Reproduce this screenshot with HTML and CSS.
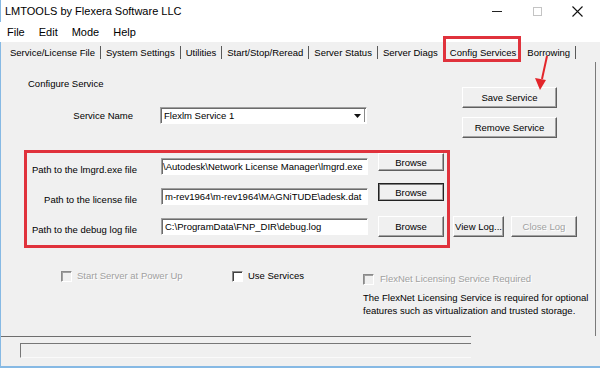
FILE: index.html
```html
<!DOCTYPE html>
<html lang="en">
  <head>
    <meta charset="UTF-8" />
    <meta name="viewport" content="width=device-width, initial-scale=1.0" />
    <title>LMTOOLS by Flexera Software LLC</title>
    <link rel="stylesheet" href="styles.css">
  </head>
  <body>
    <div class="window">
      <div class="titlebar">
        <span class="title">LMTOOLS by Flexera Software LLC</span>
        <div class="controls">
          <span class="ctl"><span class="ctl-min"></span></span>
          <span class="ctl"><span class="ctl-max"></span></span>
          <span class="ctl">
            <svg width="11" height="11" viewBox="0 0 11 11">
              <path d="M0.5 0.5 L10.5 10.5 M10.5 0.5 L0.5 10.5" stroke="#111" stroke-width="1.1" fill="none" />
            </svg>
          </span>
        </div>
      </div>

      <div class="menubar">
        <span class="menu-item">File</span>
        <span class="menu-item">Edit</span>
        <span class="menu-item">Mode</span>
        <span class="menu-item">Help</span>
      </div>

      <div class="tabs">
        <span class="tab">Service/License File</span>
        <span class="tab">System Settings</span>
        <span class="tab">Utilities</span>
        <span class="tab">Start/Stop/Reread</span>
        <span class="tab">Server Status</span>
        <span class="tab">Server Diags</span>
        <span class="tab active">Config Services</span>
        <span class="tab">Borrowing</span>
      </div>

      <div class="panel">
        <div class="top">
          <div class="top-left">
            <div class="heading">Configure Service</div>
            <div class="svc-row">
              <label class="svc-label">Service Name</label>
              <div class="combo">
                <span class="combo-text">Flexlm Service 1</span>
                <span class="combo-arrow">
                  <svg width="7" height="4" viewBox="0 0 7 4"><path d="M0 0 H7 L3.5 4 Z" fill="#111" /></svg>
                </span>
              </div>
            </div>
          </div>
          <div class="top-right">
            <button class="btn">Save Service</button>
            <button class="btn">Remove Service</button>
          </div>
        </div>

        <div class="paths">
          <div class="path-box">
            <div class="path-row">
              <label class="path-label">Path to the lmgrd.exe file</label>
              <div class="field field-clip">\Autodesk\Network License Manager\lmgrd.exe</div>
              <button class="btn browse">Browse</button>
            </div>
            <div class="path-row row-2">
              <label class="path-label">Path to the license file</label>
              <div class="field">m-rev1964\m-rev1964\MAGNiTUDE\adesk.dat</div>
              <button class="btn browse browse-focus">Browse</button>
            </div>
            <div class="path-row row-3">
              <label class="path-label">Path to the debug log file</label>
              <div class="field">C:\ProgramData\FNP_DIR\debug.log</div>
              <button class="btn browse">Browse</button>
            </div>
          </div>
          <div class="log-buttons">
            <button class="btn btn-view">View Log...</button>
            <button class="btn btn-close" disabled>Close Log</button>
          </div>
        </div>

        <div class="options">
          <div class="check-item item-power disabled">
            <span class="check"></span>
            <span>Start Server at Power Up</span>
          </div>
          <div class="check-item item-services">
            <span class="check"></span>
            <span>Use Services</span>
          </div>
          <div class="flexnet">
            <div class="check-item disabled">
              <span class="check"></span>
              <span>FlexNet Licensing Service Required</span>
            </div>
            <p class="note">The FlexNet Licensing Service is required for optional<br>features such as virtualization and trusted storage.</p>
          </div>
        </div>
      </div>

      <div class="footer">
        <div class="status"></div>
      </div>

      <!-- annotations drawn over the dialog -->
      <div class="tab-mark"></div>
      <svg class="arrow" width="24" height="40" viewBox="0 0 24 40">
        <path d="M17 4 L12 27" stroke="#e3262b" stroke-width="2" fill="none" />
        <polygon points="5,26 16,28 10,38" fill="#e3262b" />
      </svg>
    </div>
  </body>
</html>
```

FILE: styles.css
```css
body {
  margin: 0;
  background-color: #fff;
  font-family: "Liberation Sans", Arial, sans-serif;
  color: #000;
}

.window {
  position: relative;
  width: 600px;
  height: 368px;
  box-sizing: border-box;
  border-left: 1px solid #86b9e4;
  border-bottom: 2px solid #86b9e4;
  background-color: #f0f0f0;
  display: flex;
  flex-direction: column;
}

.titlebar {
  height: 22px;
  background-color: #fff;
  display: flex;
  align-items: center;
  padding-left: 4px;
  font-size: 11px;
}

.controls {
  margin-left: auto;
  margin-right: 3px;
  display: flex;
  height: 100%;
}

.ctl {
  width: 40px;
  display: flex;
  justify-content: center;
  align-items: center;
}

.ctl-min {
  width: 10px;
  height: 1px;
  background-color: #222;
}

.ctl-max {
  width: 9px;
  height: 9px;
  box-sizing: border-box;
  border: 1px solid #c4c4c4;
}

.menubar {
  height: 20px;
  background-color: #fff;
  display: flex;
  align-items: center;
  margin-left: -1px;
  font-size: 11px;
}

.menu-item {
  padding: 0 7px;
}

.tabs {
  height: 20px;
  display: flex;
  align-items: center;
  padding-left: 4px;
  font-size: 9.5px;
}

.tab {
  padding: 0 5px;
  line-height: 13px;
  border-right: 1px solid #5a5a5a;
  white-space: nowrap;
}

.tab.active {
  padding: 0 5px 0 6px;
  border-right-color: transparent;
}

.panel {
  height: 274px;
  width: 595px;
  box-sizing: border-box;
  border-right: 1px solid #7a7a7a;
  font-size: 9.5px;
}

.top {
  display: flex;
  height: 76px;
}

.top-left {
  padding-left: 27px;
}

.heading {
  margin-top: 15px;
  line-height: 14px;
}

.svc-row {
  display: flex;
  align-items: center;
  margin-top: 16px;
}

.svc-label {
  width: 105px;
  text-align: right;
}

.combo {
  margin-left: 27px;
  width: 207px;
  height: 17px;
  box-sizing: border-box;
  background-color: #fff;
  border: 1px solid;
  border-color: #a0a0a0 #fff #fff #a0a0a0;
  box-shadow: inset 1px 1px #6b6b6b;
  display: flex;
  align-items: center;
}

.combo-text {
  padding-left: 3px;
  flex: 1;
}

.combo-arrow {
  width: 14px;
  height: 13px;
  margin-right: 1px;
  display: flex;
  align-items: center;
  justify-content: center;
  border-right: 1px solid #8a8a8a;
}

.top-right {
  margin-left: auto;
  margin-right: 38px;
  padding-top: 25px;
  display: flex;
  flex-direction: column;
  gap: 9px;
}

.top-right .btn {
  width: 95px;
  height: 21px;
}

.btn {
  font-family: "Liberation Sans", Arial, sans-serif;
  font-size: 9.5px;
  color: #000;
  background-color: #f0f0f0;
  border: 1px solid;
  border-color: #fff #5f5f5f #5f5f5f #fff;
  box-shadow: inset -1px -1px #a3a3a3;
  padding: 0;
  box-sizing: border-box;
}

.btn:disabled {
  color: #a0a0a0;
  text-shadow: 1px 1px #fff;
}

.paths {
  display: flex;
  margin: 12px 0 0 23px;
}

.path-box {
  width: 426px;
  height: 98px;
  box-sizing: border-box;
  border: 3px solid #e0323c;
  padding: 0 3px 0 0;
}

.path-row {
  display: grid;
  grid-template-columns: 110px 207px 66px;
  column-gap: 24px;
  align-items: start;
  height: 22px;
}

.path-row .btn {
  margin-left: -14px;
  width: 66px;
}

.row-2 {
  margin-top: 8px;
}

.row-3 {
  margin-top: 11px;
  height: 21px;
}

.path-label {
  margin-top: 10px;
  line-height: 14px;
  text-align: right;
  white-space: nowrap;
}

.row-3 .path-label {
  margin-top: 7px;
}

.field {
  margin-top: 5px;
  height: 17px;
  box-sizing: border-box;
  background-color: #fff;
  border: 1px solid;
  border-color: #a0a0a0 #fff #fff #a0a0a0;
  box-shadow: inset 1px 1px #6b6b6b;
  padding-left: 3px;
  line-height: 15px;
  white-space: nowrap;
  overflow: hidden;
}

.field-clip {
  text-indent: -2px;
}

.row-3 .field {
  margin-top: 2px;
}

.browse {
  height: 18px;
}

.row-3 .browse {
  height: 21px;
}

.browse-focus {
  border-color: #222;
  box-shadow: inset 1px 1px #7d7d7d, inset -1px -1px #a3a3a3;
}

.log-buttons {
  display: flex;
  gap: 7px;
  margin-left: 3px;
  margin-top: 66px;
}

.log-buttons .btn {
  height: 21px;
}

.btn-view {
  width: 51px;
}

.btn-close {
  width: 66px;
}

.options {
  display: flex;
  align-items: flex-start;
  margin-top: 22px;
  padding-left: 60px;
}

.check-item {
  display: flex;
  align-items: center;
  gap: 5px;
  line-height: 12px;
  white-space: nowrap;
}

.item-power {
  width: 171px;
}

.item-services {
  width: 131px;
}

.check {
  width: 11px;
  height: 11px;
  box-sizing: border-box;
  background-color: #fff;
  border: 1px solid;
  border-color: #8a8a8a #fff #fff #8a8a8a;
  box-shadow: inset 1px 1px #404040;
}

.check-item.disabled {
  color: #a0a0a0;
  text-shadow: 1px 1px #fff;
}

.check-item.disabled .check {
  background-color: #f0f0f0;
  box-shadow: inset 1px 1px #a0a0a0;
}

.flexnet {
  padding-top: 3px;
}

.flexnet .check-item {
  gap: 6px;
}

.note {
  margin: 7px 0 0;
  line-height: 12.5px;
  white-space: nowrap;
}

.footer {
  height: 30px;
}

.footer::before {
  content: "";
  display: block;
  width: 470px;
  border-top: 1px solid #6e6e6e;
}

.status {
  margin: 6px 0 0 19px;
  width: 451px;
  height: 15px;
  box-sizing: border-box;
  border-top: 1px solid #777;
  border-left: 1px solid #777;
  border-bottom: 1px solid #fafafa;
}

.tab-mark {
  position: absolute;
  left: 442px;
  top: 36px;
  width: 78px;
  height: 26px;
  box-sizing: border-box;
  border: 3px solid #e0323c;
}

.arrow {
  position: absolute;
  left: 529px;
  top: 52px;
}
```
